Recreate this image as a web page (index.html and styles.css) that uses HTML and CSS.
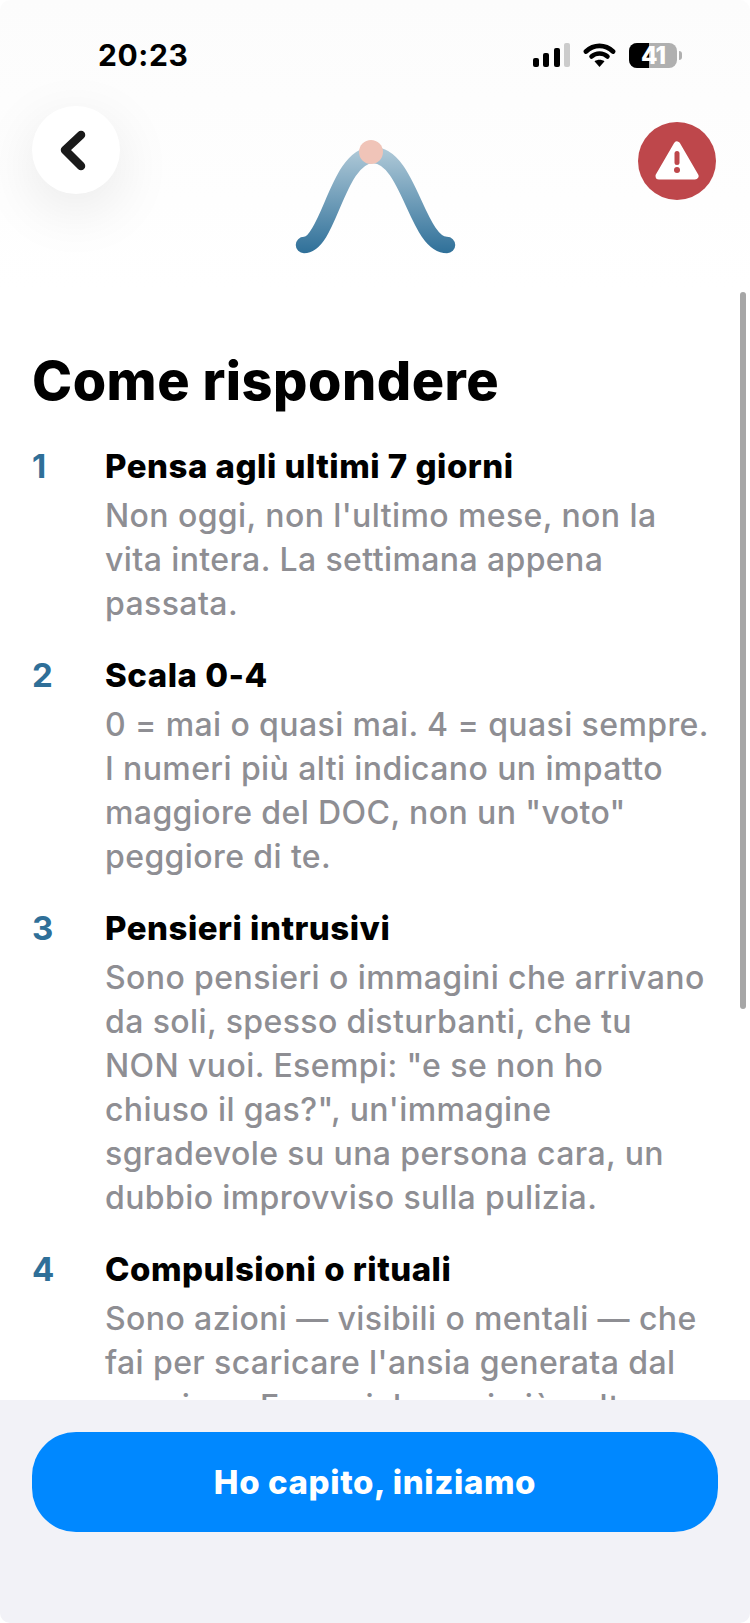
FILE: index.html
```html
<!DOCTYPE html>
<html lang="it">
<head>
  <meta charset="UTF-8">
  <title>Come rispondere</title>
  <link rel="stylesheet" href="styles.css">
</head>
<body>
  <div class="screen">
    <div class="status">
      <span class="time">20:23</span>
      <div class="status-icons">
        <svg width="37" height="24" viewBox="0 0 37 24">
          <rect x="0" y="15" width="6" height="9" rx="2" fill="#000"/>
          <rect x="10" y="10" width="6" height="14" rx="2" fill="#000"/>
          <rect x="21" y="5" width="6" height="19" rx="2" fill="#000"/>
          <rect x="31" y="0" width="6" height="24" rx="2" fill="#ccc"/>
        </svg>
        <svg width="33" height="24" viewBox="0 0 33 24">
          <path d="M3 8.500C6.800 4.800 11.300 2.800 16.500 2.800S26.200 4.800 30 8.500" fill="none" stroke="#000" stroke-width="4.800" stroke-linecap="round"/>
          <path d="M8.500 13.500C10.800 11.500 13.400 10.500 16.500 10.500S22.200 11.500 24.500 13.500" fill="none" stroke="#000" stroke-width="4.500" stroke-linecap="round"/>
          <path d="M11.500 18.200C14.500 16.200 18.500 16.200 21.500 18.200L16.500 24z" fill="#000"/>
        </svg>
        <div class="battery">
          <div class="battery-body">
            <div class="battery-fill"></div>
            <span class="battery-num">41</span>
          </div>
          <div class="battery-cap"></div>
        </div>
      </div>
    </div>

    <div class="nav">
      <div class="back">
        <svg width="32" height="44" viewBox="0 0 32 44">
          <path d="M21 7 L5 22 L21 38" fill="none" stroke="#1a1a1a" stroke-width="8.500" stroke-linecap="round" stroke-linejoin="round"/>
        </svg>
      </div>
      <svg class="logo" width="172" height="116" viewBox="0 0 172 116">
        <defs>
          <linearGradient id="curve" gradientUnits="userSpaceOnUse" x1="0" y1="7" x2="0" y2="113">
            <stop offset="0" stop-color="#b2cbd9"/>
            <stop offset="1" stop-color="#2f7099"/>
          </linearGradient>
        </defs>
        <path d="M15 105 C40 105 48 15 84 15 C120 15 128 105 158 105" fill="none" stroke="url(#curve)" stroke-width="16.500" stroke-linecap="round"/>
        <circle cx="82" cy="12" r="12" fill="#f0c4b8"/>
      </svg>
      <div class="alert">
        <svg width="44" height="40" viewBox="0 0 44 40">
          <path d="M22 4 L40 35 H4 Z" fill="#fff" stroke="#fff" stroke-width="7" stroke-linejoin="round"/>
          <rect x="19.500" y="10" width="5" height="14" rx="2.500" fill="#be474b"/>
          <circle cx="22" cy="29" r="3" fill="#be474b"/>
        </svg>
      </div>
    </div>

    <div class="content">
      <h1 class="title">Come rispondere</h1>

      <div class="step">
        <div class="step-num">1</div>
        <div class="step-text">
          <h2>Pensa agli ultimi 7 giorni</h2>
          <p>Non oggi, non l'ultimo mese, non la<br>vita intera. La settimana appena<br>passata.</p>
        </div>
      </div>
      <div class="step">
        <div class="step-num">2</div>
        <div class="step-text">
          <h2>Scala 0-4</h2>
          <p>0 = mai o quasi mai. 4 = quasi sempre.<br>I numeri più alti indicano un impatto<br>maggiore del DOC, non un "voto"<br>peggiore di te.</p>
        </div>
      </div>
      <div class="step">
        <div class="step-num">3</div>
        <div class="step-text">
          <h2>Pensieri intrusivi</h2>
          <p>Sono pensieri o immagini che arrivano<br>da soli, spesso disturbanti, che tu<br>NON vuoi. Esempi: "e se non ho<br>chiuso il gas?", un'immagine<br>sgradevole su una persona cara, un<br>dubbio improvviso sulla pulizia.</p>
        </div>
      </div>
      <div class="step">
        <div class="step-num">4</div>
        <div class="step-text">
          <h2>Compulsioni o rituali</h2>
          <p>Sono azioni — visibili o mentali — che<br>fai per scaricare l'ansia generata dal<br>pensiero. Esempi: lavarsi più volte</p>
        </div>
      </div>
      <div class="scrollbar"></div>
    </div>

    <div class="footer">
      <div class="cta">Ho capito, iniziamo</div>
    </div>
  </div>
</body>
</html>
```

FILE: styles.css
```css
html, body {
  margin:0;
  padding:0;
  background:#fff;
}

.screen {
  width:750px;
  height:1623px;
  display:flex;
  flex-direction:column;
  position:relative;
  overflow:hidden;
  border-radius:10px;
  font-family:Inter, "Liberation Sans", sans-serif;
  background:linear-gradient(#fcfcfc, #fefefe 200px, #fff 290px);
}

.status {
  height:110px;
  padding:0 68px 0 98px;
  display:flex;
  justify-content:space-between;
  align-items:center;
  box-sizing:border-box;
}

.time {
  font-size:30px;
  font-weight:700;
  color:#000;
  letter-spacing:0.6px;
}

.status-icons {
  display:flex;
  align-items:center;
  gap:13px;
}

.battery {
  display:flex;
  align-items:center;
  gap:2px;
}

.battery-body {
  width:48px;
  height:25px;
  border-radius:8px;
  background:#b0b0b0;
  position:relative;
  display:flex;
  align-items:center;
  justify-content:center;
}

.battery-fill {
  position:absolute;
  left:0;
  top:0;
  bottom:0;
  width:41%;
  border-radius:8px 0 0 8px;
  background:#000;
}

.battery-num {
  position:relative;
  color:#fff;
  font-size:24px;
  line-height:25px;
  font-weight:800;
  letter-spacing:-1px;
}

.battery-cap {
  width:3px;
  height:9px;
  border-radius:0 3px 3px 0;
  background:#b0b0b0;
}

.nav {
  height:180px;
  margin-top:-4px;
  padding:0 34px 0 32px;
  display:flex;
  justify-content:space-between;
  align-items:flex-start;
  box-sizing:border-box;
}

.back {
  width:88px;
  height:88px;
  border-radius:50%;
  background:#fff;
  display:flex;
  align-items:center;
  justify-content:center;
  box-shadow:0 16px 60px rgba(0,0,0,0.09);
}

.logo {
  margin-top:34px;
  margin-left:-8px;
}

.alert {
  width:78px;
  height:78px;
  margin-top:16px;
  border-radius:50%;
  background:#be474b;
  display:flex;
  align-items:center;
  justify-content:center;
}

.content {
  flex:1;
  min-height:0;
  overflow:hidden;
  position:relative;
  padding:0 32px;
}

.title {
  margin:64px 0 32px;
  font-size:54px;
  line-height:62px;
  font-weight:800;
  color:#000;
  letter-spacing:0.5px;
}

.step {
  display:flex;
  margin-bottom:27px;
}

.step-num {
  width:73px;
  flex:none;
  font-size:33px;
  line-height:44px;
  font-weight:700;
  color:#2f6f98;
}

.step-text h2 {
  margin:0 0 6px;
  font-size:33px;
  line-height:44px;
  font-weight:800;
  color:#000;
  letter-spacing:0.5px;
}

.step-text p {
  margin:0;
  font-size:32px;
  line-height:44px;
  font-weight:500;
  color:#8e8e93;
  white-space:nowrap;
  letter-spacing:0.4px;
}

.scrollbar {
  position:absolute;
  right:4px;
  top:6px;
  width:6px;
  height:717px;
  border-radius:3px;
  background:#a6a6a6;
}

.footer {
  height:223px;
  flex:none;
  padding:32px 32px 0;
  box-sizing:border-box;
  background:#f2f2f7;
  position:relative;
}

.cta {
  height:100px;
  border-radius:44px;
  background:#0088ff;
  color:#fff;
  font-size:33px;
  font-weight:800;
  letter-spacing:0.6px;
  display:flex;
  align-items:center;
  justify-content:center;
}
```
